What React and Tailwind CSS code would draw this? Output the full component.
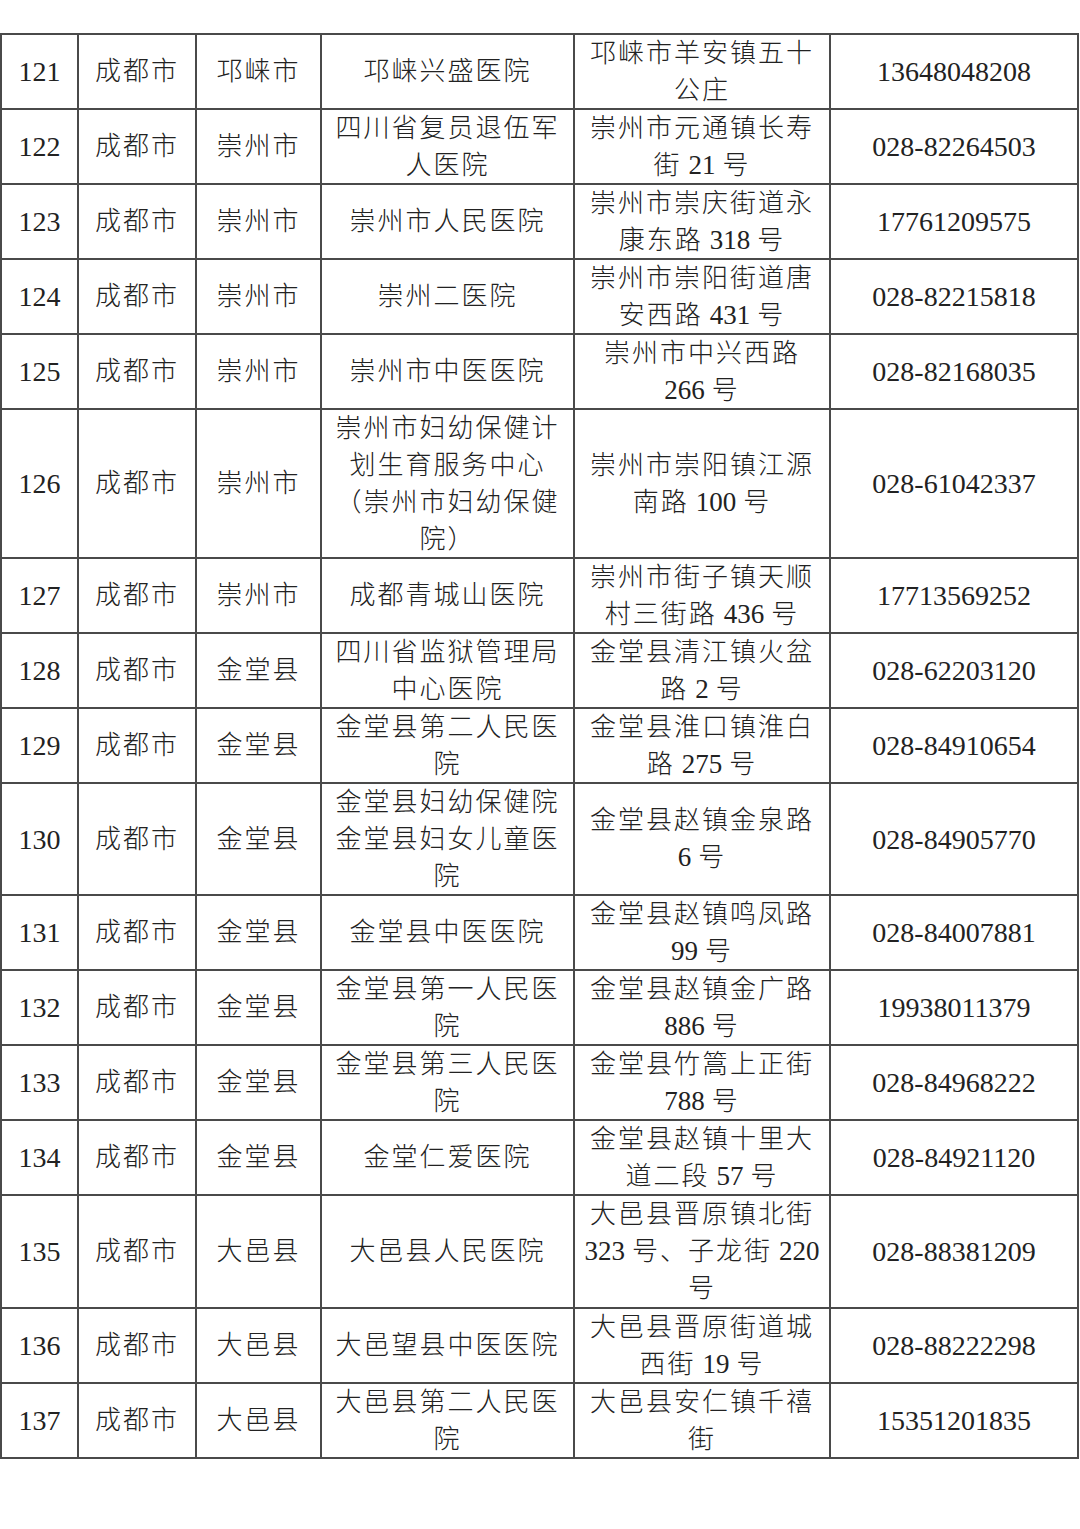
import React from "react";

const rows = [
  { no: "121", county: "邛崃市", name: ["邛崃兴盛医院"], addr: ["邛崃市羊安镇五十", "公庄"], tel: "13648048208" },
  { no: "122", county: "崇州市", name: ["四川省复员退伍军", "人医院"], addr: ["崇州市元通镇长寿", "街 21 号"], tel: "028-82264503" },
  { no: "123", county: "崇州市", name: ["崇州市人民医院"], addr: ["崇州市崇庆街道永", "康东路 318 号"], tel: "17761209575" },
  { no: "124", county: "崇州市", name: ["崇州二医院"], addr: ["崇州市崇阳街道唐", "安西路 431 号"], tel: "028-82215818" },
  { no: "125", county: "崇州市", name: ["崇州市中医医院"], addr: ["崇州市中兴西路", "266 号"], tel: "028-82168035" },
  {
    no: "126",
    county: "崇州市",
    name: ["崇州市妇幼保健计", "划生育服务中心", "（崇州市妇幼保健", "院）"],
    addr: ["崇州市崇阳镇江源", "南路 100 号"],
    tel: "028-61042337",
    h: "h-[149px]",
  },
  { no: "127", county: "崇州市", name: ["成都青城山医院"], addr: ["崇州市街子镇天顺", "村三街路 436 号"], tel: "17713569252" },
  { no: "128", county: "金堂县", name: ["四川省监狱管理局", "中心医院"], addr: ["金堂县清江镇火盆", "路 2 号"], tel: "028-62203120" },
  { no: "129", county: "金堂县", name: ["金堂县第二人民医", "院"], addr: ["金堂县淮口镇淮白", "路 275 号"], tel: "028-84910654" },
  {
    no: "130",
    county: "金堂县",
    name: ["金堂县妇幼保健院", "金堂县妇女儿童医", "院"],
    addr: ["金堂县赵镇金泉路", "6 号"],
    tel: "028-84905770",
    h: "h-[112px]",
  },
  { no: "131", county: "金堂县", name: ["金堂县中医医院"], addr: ["金堂县赵镇鸣凤路", "99 号"], tel: "028-84007881" },
  { no: "132", county: "金堂县", name: ["金堂县第一人民医", "院"], addr: ["金堂县赵镇金广路", "886 号"], tel: "19938011379" },
  { no: "133", county: "金堂县", name: ["金堂县第三人民医", "院"], addr: ["金堂县竹篙上正街", "788 号"], tel: "028-84968222" },
  { no: "134", county: "金堂县", name: ["金堂仁爱医院"], addr: ["金堂县赵镇十里大", "道二段 57 号"], tel: "028-84921120" },
  {
    no: "135",
    county: "大邑县",
    name: ["大邑县人民医院"],
    addr: ["大邑县晋原镇北街", "323 号、子龙街 220", "号"],
    tel: "028-88381209",
    h: "h-[113px]",
  },
  { no: "136", county: "大邑县", name: ["大邑望县中医医院"], addr: ["大邑县晋原街道城", "西街 19 号"], tel: "028-88222298" },
  { no: "137", county: "大邑县", name: ["大邑县第二人民医", "院"], addr: ["大邑县安仁镇千禧", "街"], tel: "15351201835" },
];

// digits in the address text are narrower than the CJK glyphs
function Mixed({ text }) {
  const parts = text.split(/(\d+|\s)/).filter((p) => p !== "");
  return parts.map((p, i) => {
    if (/^\d+$/.test(p))
      return (
        <span key={i} className="text-[27px] tracking-[0px]">
          {p}
        </span>
      );
    if (p === " ") return <span key={i} className="inline-block w-[7px]" />;
    return <span key={i}>{p}</span>;
  });
}

function Cell({ w, children, num }) {
  return (
    <div
      className={`${w} shrink-0 h-full flex flex-col items-center justify-center border-r-2 border-[#4a4a4a] text-center leading-[37px] whitespace-nowrap ${
        num ? "text-[28px] tracking-[0px]" : "text-[26px] tracking-[2px] font-light"
      }`}
    >
      {children}
    </div>
  );
}

function Lines({ lines }) {
  return lines.map((l, i) => (
    <div key={i}>
      <Mixed text={l} />
    </div>
  ));
}

export default function App() {
  return (
    <div
      className="min-h-[1529px] w-[1080px] bg-white pt-[33px] text-[#222]"
      style={{ fontFamily: '"Liberation Serif", "Noto Sans CJK SC", serif' }}
    >
      <div className="w-[1079px] border-l-2 border-t-2 border-[#4a4a4a]">
        {rows.map((r) => (
          <div key={r.no} className={`flex border-b-2 border-[#4a4a4a] ${r.h || "h-[75px]"}`}>
            <Cell w="w-[77px]" num>
              {r.no}
            </Cell>
            <Cell w="w-[118px]">成都市</Cell>
            <Cell w="w-[125px]">{r.county}</Cell>
            <Cell w="w-[253px]">
              <Lines lines={r.name} />
            </Cell>
            <Cell w="w-[256px]">
              <Lines lines={r.addr} />
            </Cell>
            <Cell w="w-[248px]" num>
              {r.tel}
            </Cell>
          </div>
        ))}
      </div>
    </div>
  );
}
